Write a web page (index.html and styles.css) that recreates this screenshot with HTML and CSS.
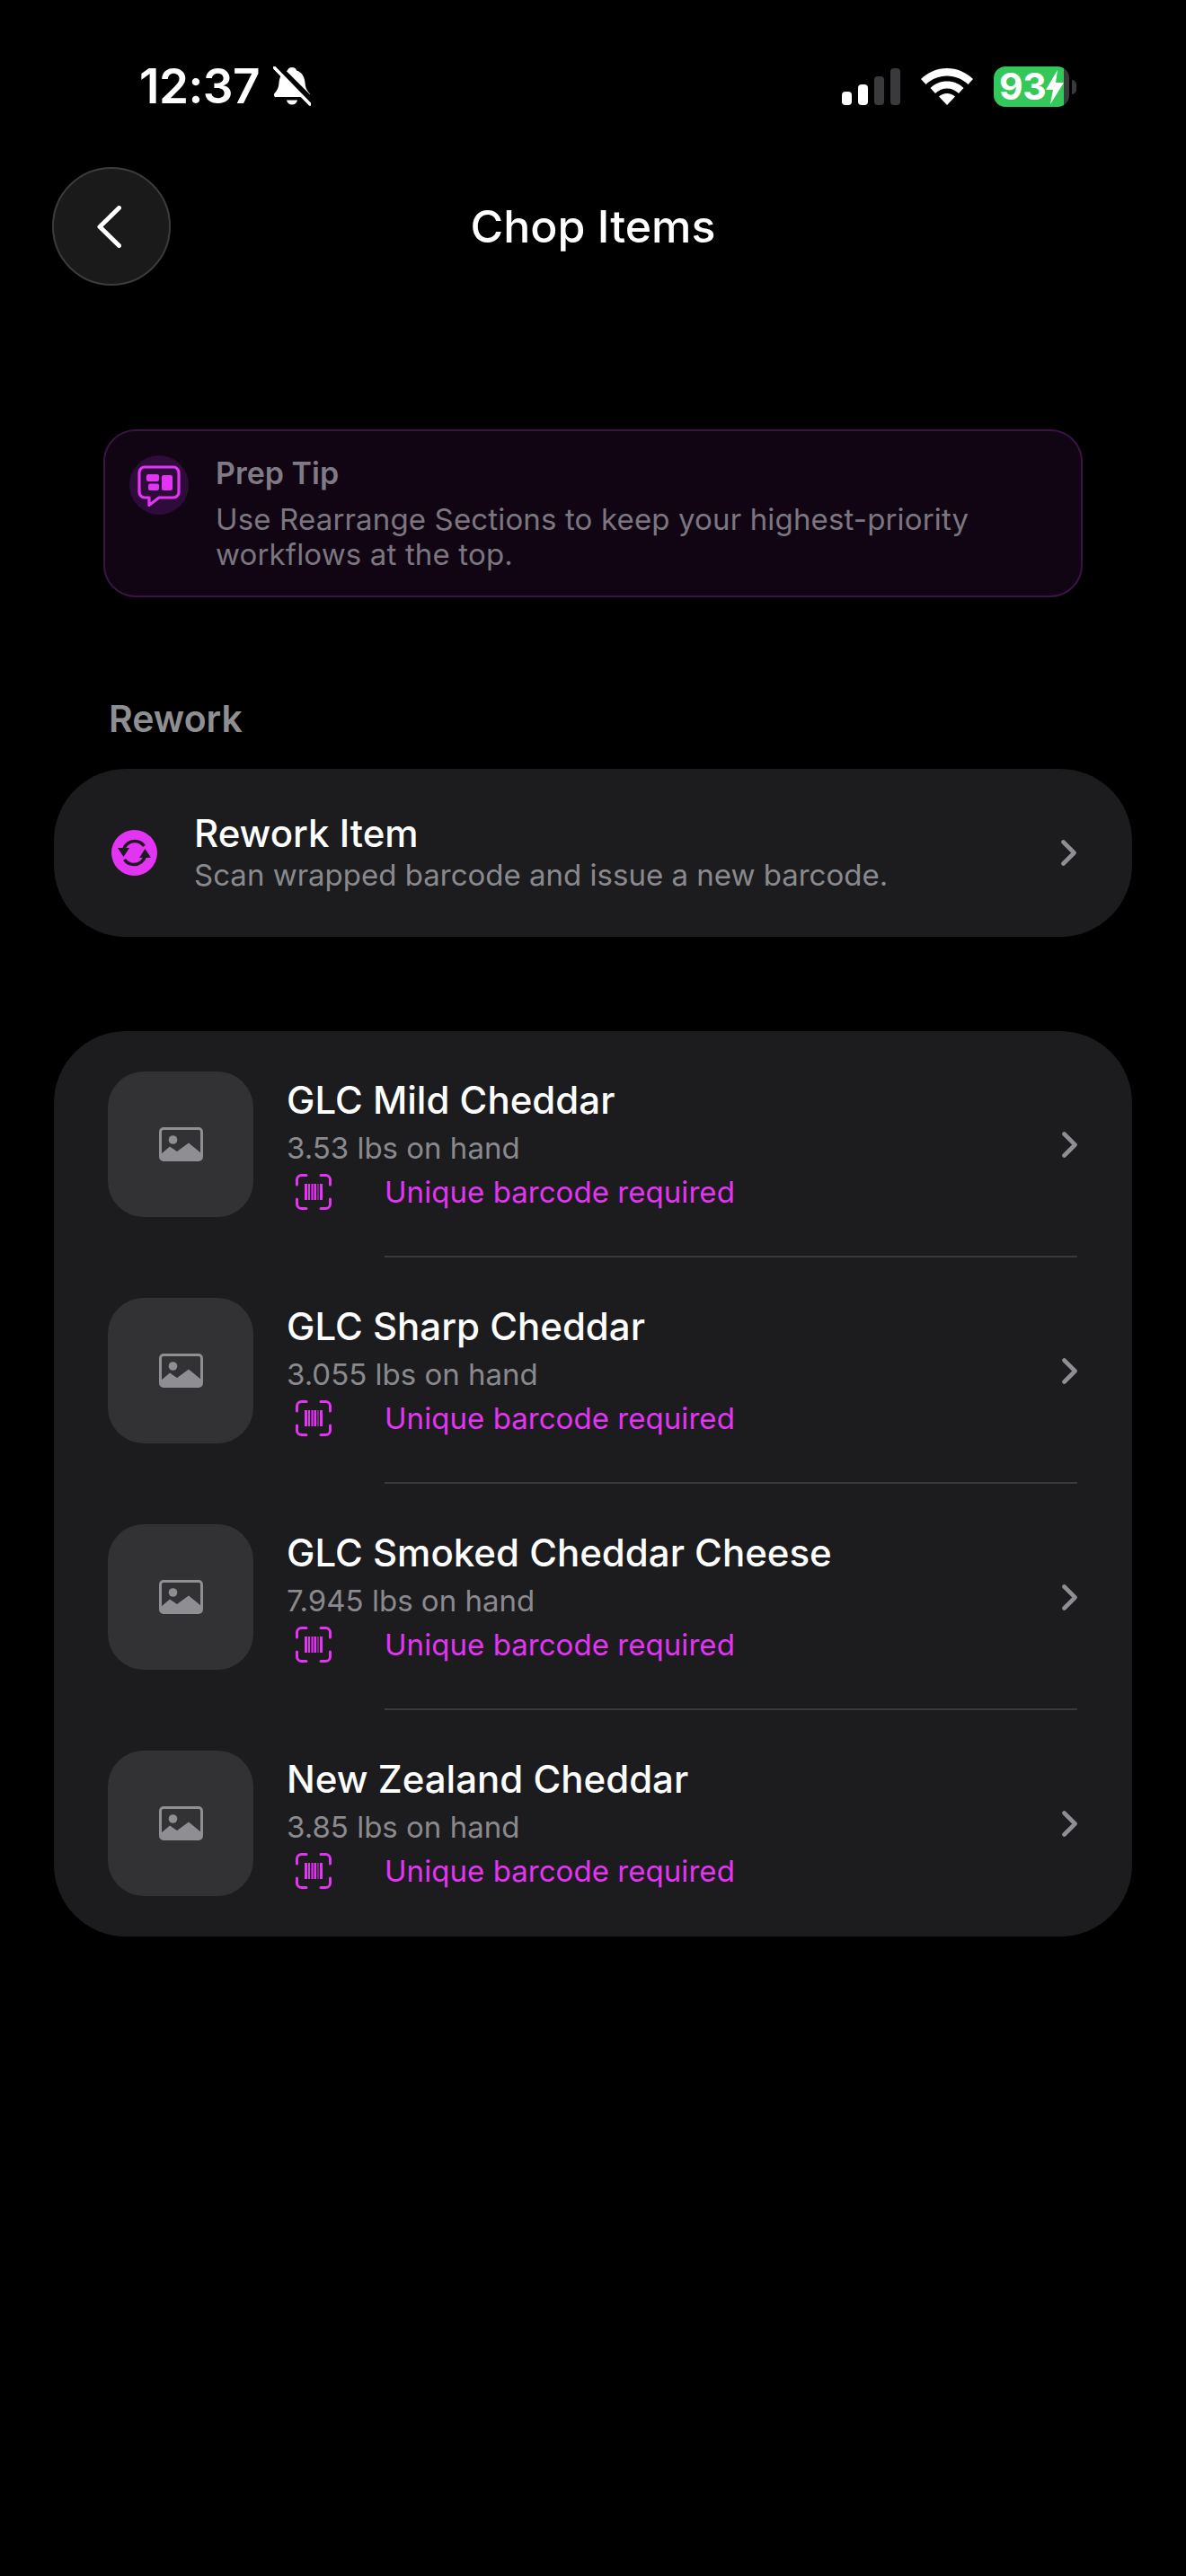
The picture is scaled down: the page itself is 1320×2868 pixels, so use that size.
FILE: index.html
```html
<!DOCTYPE html>
<html lang="en">
<head>
<meta charset="utf-8">
<title>Chop Items</title>
<link rel="stylesheet" href="styles.css">
</head>
<body>
<svg width="0" height="0" class="defs">
  <defs>
    <symbol id="chev" viewBox="0 0 17 29"><path d="M2.5 2.500 14.500 14.500 2.500 26.500" fill="none" stroke="currentColor" stroke-width="4.600" stroke-linecap="round" stroke-linejoin="round"/></symbol>
    <symbol id="img" viewBox="0 0 49 38">
      <rect x="1.500" y="1.500" width="46" height="35" rx="3.500" fill="none" stroke="currentColor" stroke-width="3"/>
      <circle cx="15.500" cy="14" r="4.800" fill="currentColor"/>
      <path d="M2 30 12 21.500 20 27 33 17.500 47 29V34a3 3 0 0 1-3 3H5a3 3 0 0 1-3-3Z" fill="currentColor"/>
    </symbol>
    <symbol id="bar" viewBox="0 0 40 40">
      <path d="M12 1.500H6.500a5 5 0 0 0-5 5V12M28 1.500h5.500a5 5 0 0 1 5 5V12M12 38.500H6.500a5 5 0 0 1-5-5V28M28 38.500h5.500a5 5 0 0 0 5-5V28" fill="none" stroke="currentColor" stroke-width="3" stroke-linecap="round"/>
      <path d="M10 11h3v18h-3ZM14 11h2v18h-2ZM17.500 11h2v18h-2ZM20.500 11h2.500v18h-2.500ZM24.500 11h1v18h-1ZM27 11h3v18h-3Z" fill="currentColor"/>
    </symbol>
  </defs>
</svg>

<div class="status">
  <div class="status-left">
    <span class="time">12:37</span>
    <svg class="bell" viewBox="0 0 42 45" aria-hidden="true">
      <path d="M21 1c3 0 4.500 1.500 5 3.500C32 6 35 12 35.500 18c.4 5 1.500 8 5 12 1.200 1.500.5 4-1.500 4H3c-2 0-2.700-2.500-1.500-4 3.500-4 4.600-7 5-12C7 12 10 6 16 4.500 16.500 2.500 18 1 21 1Z" fill="#fff"/>
      <path d="M15 37.500h12c-.8 3.500-3 5-6 5s-5.200-1.500-6-5Z" fill="#fff"/>
      <path d="M2 -2 45 41" stroke="#000" stroke-width="8"/>
      <path d="M1 1 41 42" stroke="#fff" stroke-width="3.600" stroke-linecap="round"/>
    </svg>
  </div>
  <div class="status-right">
    <div class="signal">
      <i class="sig s1"></i><i class="sig s2"></i><i class="sig s3"></i><i class="sig s4"></i>
    </div>
    <svg class="wifi" viewBox="0 0 58 42" aria-hidden="true">
      <path d="M29 0C17.500 0 8 4.500 0 12l5.500 6C12 12 20 8.500 29 8.500S46 12 52.500 18L58 12C50 4.500 40.500 0 29 0Z" fill="#fff"/>
      <path d="M29 14.500c-7.500 0-13.500 2.500-18.500 7.500l5.500 6c3.500-3.500 8-5.500 13-5.500s9.500 2 13 5.500l5.500-6C42.500 17 36.500 14.500 29 14.500Z" fill="#fff"/>
      <path d="M29 28c-3.500 0-6.500 1.200-9 3.500L29 41l9-9.500C35.500 29.200 32.500 28 29 28Z" fill="#fff"/>
    </svg>
    <div class="battery">
      <span class="batt-num">93</span>
      <svg class="bolt" viewBox="0 0 20 38" aria-hidden="true"><path d="M13 0 0 22h8L5 38 20 14h-9Z" fill="#fff"/></svg>
    </div>
    <i class="batt-tip"></i>
  </div>
</div>

<header class="nav">
  <button class="back" aria-label="Back">
    <svg class="back-ico" viewBox="0 0 27 47" aria-hidden="true"><path d="M24.500 2.500 3 23.500 24.500 44.500" fill="none" stroke="#fff" stroke-width="5" stroke-linecap="round" stroke-linejoin="round"/></svg>
  </button>
  <h1 class="title">Chop Items</h1>
</header>

<section class="tip">
  <div class="tip-ico">
    <svg viewBox="0 0 48 46" aria-hidden="true">
      <path d="M8 2h32a6 6 0 0 1 6 6v22a6 6 0 0 1-6 6H24L13 44.500V36H8a6 6 0 0 1-6-6V8a6 6 0 0 1 6-6Z" fill="none" stroke="#e234f2" stroke-width="3.200" stroke-linejoin="round"/>
      <rect x="10" y="10" width="14" height="8" rx="2" fill="#e234f2"/>
      <rect x="12" y="20.500" width="12" height="7.500" rx="2" fill="#e234f2"/>
      <rect x="27" y="11" width="12" height="17" rx="2" fill="#e234f2"/>
    </svg>
  </div>
  <div class="tip-text">
    <div class="tip-title">Prep Tip</div>
    <p class="tip-body">Use Rearrange Sections to keep your highest-priority workflows at the top.</p>
  </div>
</section>

<h2 class="section-label">Rework</h2>

<section class="rework">
  <svg class="rework-ico" viewBox="0 0 51 51" aria-hidden="true">
    <circle cx="25.500" cy="25.500" r="25.500" fill="#e234f2"/>
    <path d="M13.500 22C15 16.500 20 12.500 26 12.500c4.500 0 8 2 10.500 5.500" fill="none" stroke="#1c1c1e" stroke-width="3.600"/>
    <path d="M37.500 29C36 34.500 31 38.500 25 38.500c-4.500 0-8-2-10.500-5.500" fill="none" stroke="#1c1c1e" stroke-width="3.600"/>
    <path d="M7 20 20 20 13.500 30Z M44 31 31 31 37.500 21Z" fill="#1c1c1e"/>
  </svg>
  <div class="rework-text">
    <div class="rework-title">Rework Item</div>
    <div class="rework-sub">Scan wrapped barcode and issue a new barcode.</div>
  </div>
  <svg class="chev"><use href="#chev"/></svg>
</section>

<section class="list">
  <article class="row">
    <div class="thumb"><svg class="thumb-ico"><use href="#img"/></svg></div>
    <div class="row-text">
      <div class="row-name">GLC Mild Cheddar</div>
      <div class="row-qty">3.53 lbs on hand</div>
      <div class="row-req"><svg class="bar-ico"><use href="#bar"/></svg><span>Unique barcode required</span></div>
    </div>
    <svg class="chev"><use href="#chev"/></svg>
  </article>
  <div class="divider"></div>
  <article class="row">
    <div class="thumb"><svg class="thumb-ico"><use href="#img"/></svg></div>
    <div class="row-text">
      <div class="row-name">GLC Sharp Cheddar</div>
      <div class="row-qty">3.055 lbs on hand</div>
      <div class="row-req"><svg class="bar-ico"><use href="#bar"/></svg><span>Unique barcode required</span></div>
    </div>
    <svg class="chev"><use href="#chev"/></svg>
  </article>
  <div class="divider"></div>
  <article class="row">
    <div class="thumb"><svg class="thumb-ico"><use href="#img"/></svg></div>
    <div class="row-text">
      <div class="row-name">GLC Smoked Cheddar Cheese</div>
      <div class="row-qty">7.945 lbs on hand</div>
      <div class="row-req"><svg class="bar-ico"><use href="#bar"/></svg><span>Unique barcode required</span></div>
    </div>
    <svg class="chev"><use href="#chev"/></svg>
  </article>
  <div class="divider"></div>
  <article class="row">
    <div class="thumb"><svg class="thumb-ico"><use href="#img"/></svg></div>
    <div class="row-text">
      <div class="row-name">New Zealand Cheddar</div>
      <div class="row-qty">3.85 lbs on hand</div>
      <div class="row-req"><svg class="bar-ico"><use href="#bar"/></svg><span>Unique barcode required</span></div>
    </div>
    <svg class="chev"><use href="#chev"/></svg>
  </article>
</section>
</body>
</html>
```

FILE: styles.css
```css
* { box-sizing: border-box; }
html, body { margin: 0; padding: 0; background: #000; }
body {
  width: 1320px;
  height: 2868px;
  overflow: hidden;
  font-family: Inter, "Liberation Sans", sans-serif;
  color: #fff;
}
.defs { display: block; height: 0; }

/* status bar */
.status {
  height: 186px;
  padding: 74px 122px 0 155px;
  display: flex;
  justify-content: space-between;
  align-items: flex-start;
}
.status-left { display: flex; align-items: center; height: 45px; gap: 15px; }
.time { font-size: 53px; font-weight: 600; line-height: 45px; letter-spacing: -0.5px; }
.bell { width: 42px; height: 45px; }
.status-right { display: flex; align-items: flex-start; height: 45px; position: relative; }
.signal { display: flex; align-items: flex-end; gap: 7px; height: 43px; width: 65px; margin-right: 23px; }
.sig { display: block; width: 11px; border-radius: 4px; background: #3a3a3c; }
.s1 { height: 15px; background: #fff; }
.s2 { height: 23px; background: #fff; }
.s3 { height: 32px; }
.s4 { height: 41px; }
.wifi { width: 58px; height: 42px; margin-top: 2px; margin-right: 23px; }
.battery {
  width: 84px;
  height: 45px;
  border-radius: 13px;
  background: linear-gradient(90deg, #34c759 0 93%, #3a3a3c 93% 100%);
  display: flex;
  align-items: center;
  padding-left: 6px;
}
.batt-num { font-size: 41px; font-weight: 700; line-height: 45px; letter-spacing: -0.5px; }
.bolt { width: 20px; height: 38px; }
.batt-tip { display: block; width: 5px; height: 16px; margin: 15px 0 0 3px; border-radius: 0 5px 5px 0; background: #3a3a3c; }

/* nav */
.nav {
  display: grid;
  grid-template-columns: 132px 1fr 132px;
  padding: 0 58px;
  align-items: center;
  height: 132px;
}
.back {
  width: 132px;
  height: 132px;
  border-radius: 50%;
  background: #1a1a1a;
  border: 2px solid #3c3c3c;
  padding: 0;
  display: flex;
  align-items: center;
  justify-content: center;
}
.back-ico { width: 27px; height: 47px; margin-right: 5px; }
.title { margin: 0; text-align: center; font-size: 50px; font-weight: 500; line-height: 60px; }

/* tip */
.tip {
  margin: 160px 115px 0;
  height: 187px;
  border: 2px solid #3b1446;
  border-radius: 36px;
  background: #110514;
  padding: 27px 30px 0 27px;
  display: flex;
  gap: 30px;
  align-items: flex-start;
}
.tip-ico {
  width: 66px;
  height: 66px;
  border-radius: 50%;
  background: #2e0c3a;
  flex: none;
  display: flex;
  align-items: center;
  justify-content: center;
}
.tip-ico svg { width: 48px; height: 46px; margin-top: 2px; }
.tip-text { flex: 1; }
.tip-title { font-size: 34px; font-weight: 600; line-height: 40px; color: #7f7a83; }
.tip-body { margin: 12px 0 0; font-size: 33px; line-height: 39px; letter-spacing: 0.15px; color: #7b7680; }

/* section */
.section-label {
  margin: 111px 0 0 121px;
  font-size: 41px;
  font-weight: 600;
  line-height: 48px;
  color: #8e8e93;
}
.rework {
  margin: 32px 60px 0;
  height: 187px;
  border-radius: 80px;
  background: #1c1c1e;
  padding: 0 62px 0 64px;
  display: flex;
  align-items: center;
}
.rework-ico { width: 51px; height: 51px; flex: none; margin-right: 41px; }
.rework-text { flex: 1; }
.rework-title { font-size: 42px; font-weight: 500; line-height: 48px; }
.rework-sub { font-size: 33px; line-height: 44px; color: #8a8a8e; }
.chev { width: 17px; height: 29px; color: #8e8e93; flex: none; }

/* list */
.list {
  margin: 105px 60px 0;
  background: #1c1c1e;
  border-radius: 80px;
  padding: 45px 61px 45px 60px;
}
.row { display: flex; align-items: center; height: 162px; }
.thumb {
  width: 162px;
  height: 162px;
  border-radius: 40px;
  background: #323234;
  flex: none;
  display: flex;
  align-items: center;
  justify-content: center;
  margin-right: 37px;
}
.thumb-ico { width: 49px; height: 38px; color: #8e8e93; }
.row-text { flex: 1; }
.row-name { font-size: 42px; font-weight: 500; line-height: 54px; }
.row-qty { font-size: 33px; line-height: 52px; color: #8a8a8e; }
.row-req {
  display: flex;
  align-items: center;
  gap: 59px;
  padding-left: 10px;
  margin-top: 0;
  font-size: 33px;
  line-height: 46px;
  letter-spacing: 0.05px;
  color: #e234f2;
}
.bar-ico { width: 40px; height: 40px; flex: none; }
.divider { height: 2px; margin: 43px 0 45px 308px; background: #3a3a3c; }
```
